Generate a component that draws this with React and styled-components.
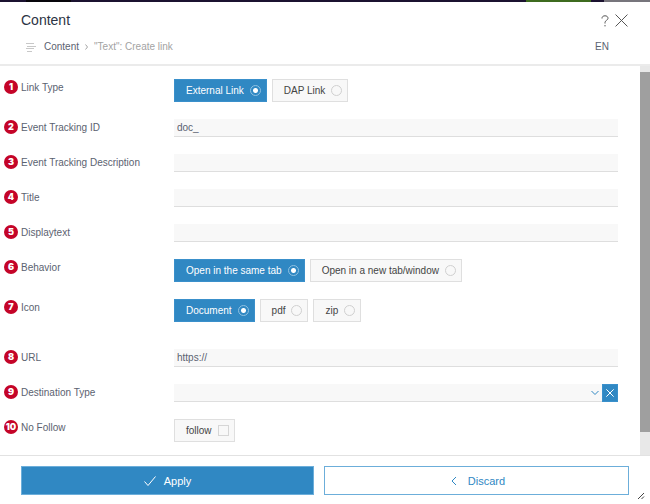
// App.jsx
import React, { useState } from "react";
import styled, { createGlobalStyle } from "styled-components";

const GlobalStyle = createGlobalStyle`
  * {
    box-sizing: border-box;
  }
  body {
    margin: 0;
    background: #fff;
    color: #5b6270;
    font-family: "Liberation Sans", Arial, sans-serif;
    font-size: 10px;
  }
  button, input, select {
    font: inherit;
    color: inherit;
    margin: 0;
  }
`;

const Dialog = styled.form`
  position: relative;
  display: flex;
  flex-direction: column;
  min-height: 100vh;
`;

const TopStrip = styled.div`
  height: 2px;
  background: linear-gradient(
    to right,
    #1b1230 4%,
    #08060c 4% 11%,
    #1b1230 11% 81%,
    #3d6b1f 81% 91%,
    #1b1230 91% 93%,
    #77757c 93%
  );
`;

const Header = styled.header`
  display: flex;
  flex-direction: column;
  gap: 7px;
  padding: 8px 22px 8px 21px;
  border-bottom: 2px solid #ebebeb;
`;

const HeaderRow = styled.div`
  display: flex;
  align-items: center;
  justify-content: space-between;
`;

const Heading = styled.h1`
  margin: 0;
  font-size: 14px;
  font-weight: normal;
  line-height: 21px;
  color: #2c3444;
`;

const HeaderActions = styled.div`
  display: flex;
  align-items: center;
  gap: 6px;
`;

const IconButton = styled.button`
  display: flex;
  padding: 0;
  border: 0;
  background: none;
  color: #555;
  cursor: pointer;
`;

const Breadcrumb = styled.nav`
  display: flex;
  align-items: center;
  gap: 6px;
  padding-left: 5px;
  line-height: 16px;
  color: #a3a3a3;

  svg {
    flex: none;
  }
`;

const Crumb = styled.a`
  margin-left: 2px;
  color: #5b6270;
  text-decoration: none;
`;

const Language = styled.span`
  margin-right: 19px;
  line-height: 18px;
`;

const Body = styled.div`
  display: flex;
  flex: 1;
`;

const Fields = styled.div`
  display: flex;
  flex: 1;
  flex-direction: column;
  gap: 17px;
  min-width: 0;
  padding: 13px 22px 13px 4px;
`;

const Row = styled.div`
  display: grid;
  grid-template-columns: 14px 150px 1fr;
  column-gap: 3px;
  align-items: start;
  margin-top: ${(props) => (props.$spaced ? "10px" : "0")};
`;

const Badge = styled.span`
  display: block;
  margin-top: 1px;
  height: 14px;
  border-radius: 50%;
  background: #c40428;
  color: #fff;
  font-family: Inter, sans-serif;
  font-size: 9px;
  font-weight: 900;
  line-height: 13px;
  text-align: center;
`;

const Label = styled.label`
  line-height: 18px;
`;

const TextInput = styled.input`
  width: 100%;
  height: 18px;
  padding: 0 3px;
  border: 0;
  border-bottom: 1px solid #dedede;
  border-radius: 0;
  background: #f8f8f8;
  outline: none;
`;

const Options = styled.div`
  display: flex;
  gap: 5px;
`;

const Option = styled.label`
  display: flex;
  align-items: center;
  gap: 6px;
  height: 23px;
  padding: 0 5px 0 11px;
  border: 1px solid ${(props) => (props.$active ? "#3a90cb" : "#dfdfdf")};
  background: ${(props) => (props.$active ? "#3088c3" : "#f8f8f8")};
  color: ${(props) => (props.$active ? "#fff" : "#444")};
  white-space: nowrap;
  cursor: pointer;
`;

const Radio = styled.input`
  appearance: none;
  width: 11px;
  height: 11px;
  border: 1px solid #d0d0d0;
  border-radius: 50%;

  &:checked {
    border-color: #8fc1e2;
    background: radial-gradient(circle, #fff 2px, transparent 3px);
  }
`;

const Checkbox = styled.input`
  appearance: none;
  width: 11px;
  height: 11px;
  border: 1px solid #d6d6d6;

  &:checked {
    background: #3088c3;
  }
`;

const SelectRow = styled.div`
  display: flex;
`;

const SelectBox = styled.div`
  position: relative;
  flex: 1;

  svg {
    position: absolute;
    top: 5px;
    right: 3px;
    pointer-events: none;
  }
`;

const Select = styled.select`
  appearance: none;
  display: block;
  width: 100%;
  height: 18px;
  padding: 0 16px 0 3px;
  border: 0;
  border-bottom: 1px solid #dedede;
  border-radius: 0;
  background: #f8f8f8;
`;

const ClearButton = styled.button`
  display: flex;
  align-items: center;
  justify-content: center;
  width: 16px;
  height: 18px;
  padding: 0;
  border: 1px solid #3a90cb;
  background: #3088c3;
  color: #fff;
  cursor: pointer;
`;

const ScrollTrack = styled.div`
  display: flex;
  width: 10px;
  padding: 6px 0 23px;
  background: #e8e8e8;
`;

const ScrollThumb = styled.div`
  flex: 1;
  background: #9f9f9f;
`;

const Footer = styled.footer`
  display: grid;
  grid-template-columns: 49fr 51fr;
  gap: 10px;
  padding: 10px 21px 9px;
  border-top: 1px solid #e2e2e2;
`;

const FooterButton = styled.button`
  display: flex;
  align-items: center;
  justify-content: center;
  gap: 8px;
  height: 29px;
  border: 1px solid #6caeda;
  background: ${(props) => (props.$primary ? "#3088c3" : "#fff")};
  color: ${(props) => (props.$primary ? "#fff" : "#3088c3")};
  font-size: 11px;
  cursor: pointer;
`;

const ResizeGrip = styled.svg`
  position: absolute;
  right: 5px;
  bottom: 4px;
`;

const CrossIcon = ({ size }) => (
  <svg width={size} height={size} viewBox="0 0 12 12" fill="none" stroke="currentColor" strokeWidth={12 / size}>
    <path d="M0.5 0.5L11.5 11.5M11.5 0.5L0.5 11.5" />
  </svg>
);

const RadioGroup = ({ name, label, options }) => {
  const [value, setValue] = useState(options[0]);
  return (
    <Options role="radiogroup" aria-label={label} id={name}>
      {options.map((option) => (
        <Option key={option} $active={option === value}>
          {option}
          <Radio
            type="radio"
            name={name}
            checked={option === value}
            onChange={() => setValue(option)}
          />
        </Option>
      ))}
    </Options>
  );
};

const fields = [
  { name: "linkType", label: "Link Type", options: ["External Link", "DAP Link"] },
  { name: "trackingId", label: "Event Tracking ID", value: "doc_" },
  { name: "trackingDescription", label: "Event Tracking Description" },
  { name: "title", label: "Title" },
  { name: "displaytext", label: "Displaytext" },
  {
    name: "behavior",
    label: "Behavior",
    options: ["Open in the same tab", "Open in a new tab/window"],
  },
  { name: "icon", label: "Icon", options: ["Document", "pdf", "zip"] },
  { name: "url", label: "URL", value: "https://", spaced: true },
  { name: "destination", label: "Destination Type", type: "select" },
  { name: "follow", label: "No Follow", type: "checkbox" },
];

const Control = ({ field }) => {
  if (field.options) {
    return <RadioGroup name={field.name} label={field.label} options={field.options} />;
  }
  if (field.type === "select") {
    return (
      <SelectRow>
        <SelectBox>
          <Select id={field.name} defaultValue="">
            <option value="" />
          </Select>
          <svg width="8" height="8" viewBox="0 0 8 8" fill="none" stroke="#3088c3">
            <path d="M0.5 2L4 5.5L7.5 2" />
          </svg>
        </SelectBox>
        <ClearButton type="button" aria-label="Clear">
          <CrossIcon size={8} />
        </ClearButton>
      </SelectRow>
    );
  }
  if (field.type === "checkbox") {
    return (
      <Options>
        <Option>
          follow
          <Checkbox type="checkbox" id={field.name} />
        </Option>
      </Options>
    );
  }
  return <TextInput type="text" id={field.name} defaultValue={field.value} />;
};

const App = () => {
  return (
    <>
      <GlobalStyle />
      <Dialog onSubmit={(e) => e.preventDefault()}>
        <TopStrip />
        <Header>
          <HeaderRow>
            <Heading>Content</Heading>
            <HeaderActions>
              <IconButton type="button" aria-label="Help">
                <svg width="8" height="12" viewBox="0 0 8 12" fill="none" stroke="currentColor">
                  <path d="M1 3.5C1 1.6 2.2 0.8 4 0.8S7 1.7 7 3.3C7 5.2 4 5.4 4 7.5V8.5M4 10V11.4" />
                </svg>
              </IconButton>
              <IconButton type="button" aria-label="Close">
                <CrossIcon size={13} />
              </IconButton>
            </HeaderActions>
          </HeaderRow>
          <HeaderRow>
            <Breadcrumb>
              <svg width="10" height="9" viewBox="0 0 10 9" stroke="#c8c8c8">
                <path d="M0 0.5H8M1 3.5H10M0 5.5H8M1 8.5H6" />
              </svg>
              <Crumb href="#content">Content</Crumb>
              <svg width="3" height="6" viewBox="0 0 3 6" fill="none" stroke="#a3a3a3">
                <path d="M0.5 0.5L2.5 3L0.5 5.5" />
              </svg>
              <span>"Text": Create link</span>
            </Breadcrumb>
            <Language>EN</Language>
          </HeaderRow>
        </Header>
        <Body>
          <Fields>
            {fields.map((field, index) => (
              <Row key={field.name} $spaced={field.spaced}>
                <Badge>{index + 1}</Badge>
                <Label
                  as={field.options ? "span" : "label"}
                  htmlFor={field.options ? undefined : field.name}
                >
                  {field.label}
                </Label>
                <Control field={field} />
              </Row>
            ))}
          </Fields>
          <ScrollTrack>
            <ScrollThumb />
          </ScrollTrack>
        </Body>
        <Footer>
          <FooterButton type="submit" $primary>
            <svg width="12" height="12" viewBox="0 0 12 12" fill="none" stroke="currentColor">
              <path d="M0.5 6.5L4 10.5L11.5 1.5" />
            </svg>
            Apply
          </FooterButton>
          <FooterButton type="button">
            <svg width="12" height="12" viewBox="0 0 12 12" fill="none" stroke="currentColor">
              <path d="M8 2L4 6L8 10" />
            </svg>
            Discard
          </FooterButton>
        </Footer>
        <ResizeGrip width="8" height="8" viewBox="0 0 8 8" stroke="#444">
          <path d="M1 7L7 1M4.5 7L7 4.5" />
        </ResizeGrip>
      </Dialog>
    </>
  );
};

export default App;
